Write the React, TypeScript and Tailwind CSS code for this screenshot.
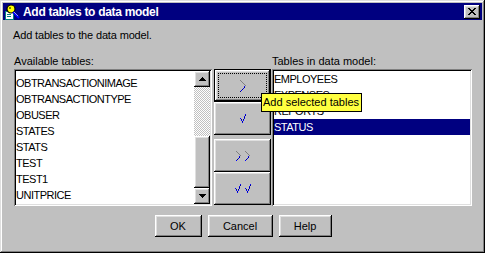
import type { ReactNode } from 'react'

type Px = [number, number, string]

const G = '#808080'
const B = '#0000ff'
const N = '#000080'

// win95 bevels
const raised =
  'shadow-[inset_-1px_-1px_#000,inset_1px_1px_#fff,inset_-2px_-2px_#808080,inset_2px_2px_#dfdfdf]'
const sunken =
  'shadow-[inset_1px_1px_#808080,inset_-1px_-1px_#fff,inset_2px_2px_#000,inset_-2px_-2px_#dfdfdf]'

const arrow: Px[] = [
  [0, 0, G], [1, 1, G], [2, 2, G], [3, 3, G], [4, 4, G], [5, 5, G],
  [4, 6, B], [4, 7, N], [3, 8, B], [2, 9, N], [1, 10, B], [0, 11, N],
]
const arrowSm: Px[] = [
  [0, 0, G], [1, 1, G], [2, 2, G], [3, 3, G], [4, 4, G],
  [3, 5, B], [3, 6, N], [2, 7, B], [1, 8, N], [0, 9, B],
]
const check: Px[] = [
  [5, 0, B], [5, 1, N], [4, 2, B], [4, 3, N], [0, 4, B], [4, 4, B],
  [1, 5, N], [3, 5, N], [1, 6, B], [3, 6, B], [2, 7, N], [2, 8, B],
]

function Pixels({ w, h, px }: { w: number; h: number; px: Px[] }) {
  return (
    <svg width={w} height={h} viewBox={`0 0 ${w} ${h}`} shapeRendering="crispEdges">
      {px.map(([x, y, c], i) => (
        <rect key={i} x={x} y={y} width={1} height={1} fill={c} />
      ))}
    </svg>
  )
}

function TitleIcon() {
  return (
    <svg width="16" height="16" viewBox="0 0 16 16" shapeRendering="crispEdges">
      <rect x="1" y="7" width="8" height="8" fill="#fff" stroke="#008080" strokeWidth="1" />
      <rect x="3" y="10" width="4" height="1" fill="#008080" />
      <rect x="3" y="12" width="4" height="1" fill="#008080" />
      <circle cx="7" cy="5" r="4" fill="#ffff00" stroke="#000" strokeWidth="1.2" shapeRendering="auto" />
      <rect x="5" y="3" width="2" height="2" fill="#808000" />
      <path d="M9 8 L15 14" stroke="#0000ff" strokeWidth="2" shapeRendering="auto" />
      <path d="M10 8 L14 12" stroke="#fff" strokeWidth="0.6" shapeRendering="auto" />
    </svg>
  )
}

function MidBtn({ focused, children }: { focused?: boolean; children: ReactNode }) {
  return (
    <div
      className={`relative flex h-[33px] items-center justify-center bg-[#c0c0c0] ${
        focused ? 'border border-black' : ''
      }`}
    >
      <div className={`absolute inset-0 ${raised}`} />
      {focused && <div className="absolute inset-[3px] border border-dotted border-black" />}
      <div className="relative flex gap-[4px]">{children}</div>
    </div>
  )
}

function DlgBtn({ label, w }: { label: string; w: string }) {
  return (
    <div className={`flex h-[22px] items-center justify-center bg-[#c0c0c0] ${raised} ${w}`}>
      {label}
    </div>
  )
}

function ScrollBtn({ up }: { up?: boolean }) {
  return (
    <div className={`flex h-[16px] items-center justify-center bg-[#c0c0c0] ${raised}`}>
      <svg width="7" height="4" viewBox="0 0 7 4" shapeRendering="crispEdges">
        <polygon points={up ? '3.5,0 7,4 0,4' : '0,0 7,0 3.5,4'} fill="#000" />
      </svg>
    </div>
  )
}

const available = [
  'OBTRANSACTIONITEM',
  'OBTRANSACTIONIMAGE',
  'OBTRANSACTIONTYPE',
  'OBUSER',
  'STATES',
  'STATS',
  'TEST',
  'TEST1',
  'UNITPRICE',
]

const inModel = ['EMPLOYEES', 'EXPENSES', 'REPORTS', 'STATUS']

export default function App() {
  return (
    <div
      className={`relative h-[253px] w-[485px] overflow-hidden bg-[#c0c0c0] p-[3px] font-['Liberation_Sans',Arial,sans-serif] text-[11px] text-black shadow-[inset_-1px_-1px_#000,inset_1px_1px_#dfdfdf,inset_-2px_-2px_#808080,inset_2px_2px_#fff]`}
    >
      <div className="flex h-[17px] items-center bg-[#000080] pl-[1px] pr-[2px]">
        <TitleIcon />
        <span className="ml-[3px] text-[12px] font-bold tracking-[-0.3px] text-white">
          Add tables to data model
        </span>
        <div className={`ml-auto flex h-[14px] w-[16px] items-center justify-center bg-[#c0c0c0] ${raised}`}>
          <svg width="8" height="7" viewBox="0 0 8 7" shapeRendering="crispEdges">
            <path d="M0 0h2v1h-2zM6 0h2v1h-2zM1 1h2v1h-2zM5 1h2v1h-2zM2 2h4v1h-4zM3 3h2v1h-2zM2 4h4v1h-4zM1 5h2v1h-2zM5 5h2v1h-2zM0 6h2v1h-2zM6 6h2v1h-2z" fill="#000" />
          </svg>
        </div>
      </div>

      <div className="pl-[11px] pr-[10px] pt-[9px]">
        <p className="-ml-[1px] leading-[13px] tracking-[-0.15px]">Add tables to the data model.</p>

        <div className="mt-[13px] flex leading-[13px]">
          <span className="w-[258px]">Available tables:</span>
          <span>Tables in data model:</span>
        </div>

        <div className="mt-[1px] flex">
          <div className={`flex h-[137px] w-[198px] bg-white p-[2px] ${sunken}`}>
            <div className="flex-1 overflow-hidden">
              <div className="-mt-[12px]">
                {available.map((t) => (
                  <div key={t} className="h-[16px] whitespace-nowrap leading-[16px] tracking-[-0.5px]">
                    {t}
                  </div>
                ))}
              </div>
            </div>
            <div className="flex w-[16px] flex-col">
              <ScrollBtn up />
              <div className="h-[49px] bg-[repeating-conic-gradient(#c0c0c0_0%_25%,#ffffff_0%_50%)] bg-size-[2px_2px]" />
              <div className={`h-[52px] bg-[#c0c0c0] ${raised}`} />
              <ScrollBtn />
            </div>
          </div>

          <div className="ml-[2px] flex w-[57px] flex-col">
            <MidBtn focused>
              <Pixels w={6} h={12} px={arrow} />
            </MidBtn>
            <MidBtn>
              <Pixels w={6} h={9} px={check} />
            </MidBtn>
            <div className="h-[4px]" />
            <MidBtn>
              <Pixels w={5} h={10} px={arrowSm} />
              <Pixels w={5} h={10} px={arrowSm} />
            </MidBtn>
            <MidBtn>
              <Pixels w={6} h={9} px={check} />
              <Pixels w={6} h={9} px={check} />
            </MidBtn>
          </div>

          <div className={`ml-[1px] h-[137px] w-[200px] bg-white p-[2px] ${sunken}`}>
            {inModel.map((t) => (
              <div
                key={t}
                className={`h-[16px] whitespace-nowrap leading-[16px] tracking-[-0.5px] ${
                  t === 'STATUS' ? 'bg-[#000080] text-white' : ''
                }`}
              >
                {t}
              </div>
            ))}
          </div>
        </div>

        <div className="mt-[9px] flex justify-center gap-[6px]">
          <DlgBtn label="OK" w="w-[47px]" />
          <DlgBtn label="Cancel" w="w-[65px]" />
          <DlgBtn label="Help" w="w-[53px]" />
        </div>
      </div>

      <div className="absolute left-[261px] top-[93px] h-[19px] w-[101px] border border-black bg-[#ffff40] pl-[1px] leading-[17px]">
        Add selected tables
      </div>
    </div>
  )
}
